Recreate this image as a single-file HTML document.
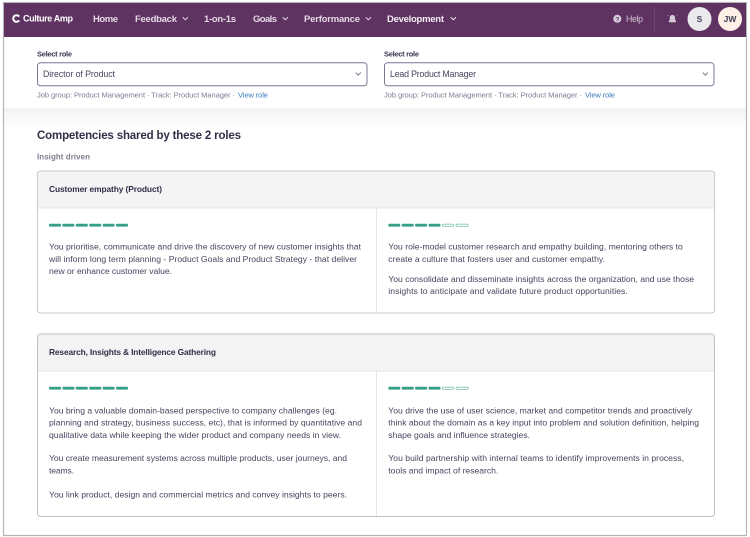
<!DOCTYPE html>
<html lang="en"><head><meta charset="utf-8"><title>Culture Amp</title>
<style>
html,body{margin:0;padding:0;background:#fff;width:750px;height:537px;overflow:hidden}
svg{display:block;filter:blur(.3px)}
text{font-family:"Liberation Sans",sans-serif}
.nav{font-size:9.5px;fill:#e3d8e4;font-weight:bold}
.lbl{font-size:7.5px;fill:#35374f;font-weight:bold}
.sel{font-size:8.8px;fill:#45465e}
.meta{font-size:7.6px;fill:#7d7e92}
.link{font-size:7.6px;fill:#3b79bd}
.b{font-size:8.6px;fill:#45465e}
.t{font-size:8.4px;fill:#2f3048;font-weight:bold}
</style></head><body>
<svg width="750" height="537" viewBox="0 0 750 537" xmlns="http://www.w3.org/2000/svg">
<defs>
<linearGradient id="sh" x1="0" y1="0" x2="0" y2="1"><stop offset="0" stop-color="#f3f3f4"/><stop offset="1" stop-color="#fff"/></linearGradient>
<g id="full"><rect x="0" y="-1.4" width="12" height="2.8" rx="1" fill="#37a085"/><rect x="13.4" y="-1.4" width="12" height="2.8" rx="1" fill="#37a085"/><rect x="26.8" y="-1.4" width="12" height="2.8" rx="1" fill="#37a085"/><rect x="40.2" y="-1.4" width="12" height="2.8" rx="1" fill="#37a085"/></g>
<g id="two"><rect x="0" y="-1.4" width="12" height="2.8" rx="1" fill="#37a085"/><rect x="13.4" y="-1.4" width="12" height="2.8" rx="1" fill="#37a085"/></g>
<path id="chev" d="M0 0l2.3 2.3L4.6 0" fill="none" stroke-width="1" stroke-linecap="round" stroke-linejoin="round"/>
</defs>
<rect width="750" height="537" fill="#fff"/>
<rect x="4" y="108" width="742" height="20" fill="url(#sh)"/>
<rect x="3.5" y="2.5" width="743" height="533" fill="none" stroke="#b5b5b8" stroke-width="1.2"/>
<rect x="4" y="3" width="742" height="34" fill="#5f3361"/>

<path d="M19.2 16.6a3.3 3.3 0 1 0 0 3.8" fill="none" stroke="#fff" stroke-width="2"/>
<text x="23" y="21.6" textLength="50" font-size="9" font-weight="bold" fill="#fff">Culture Amp</text>
<text class="nav" x="93" y="22" textLength="25">Home</text>
<text class="nav" x="135" y="22" textLength="42">Feedback</text>
<use href="#chev" x="183" y="17.5" stroke="#e3d8e4"/>
<text class="nav" x="204" y="22" textLength="32">1-on-1s</text>
<text class="nav" x="253" y="22" textLength="24">Goals</text>
<use href="#chev" x="283" y="17.5" stroke="#e3d8e4"/>
<text class="nav" x="304" y="22" textLength="56">Performance</text>
<use href="#chev" x="366" y="17.5" stroke="#e3d8e4"/>
<text class="nav" x="387" y="22" textLength="57" style="fill:#f3edf3">Development</text>
<use href="#chev" x="451" y="17.5" stroke="#f3edf3"/>

<circle cx="617.3" cy="18.8" r="4" fill="#d8cbd9"/>
<text x="615.4" y="21.5" font-size="6.5" font-weight="bold" fill="#5f3361">?</text>
<text x="626" y="22" textLength="17" font-size="8.8" fill="#d3c5d4">Help</text>
<rect x="654" y="7" width="1" height="24" fill="#6f4671"/>
<path d="M669 22v-1l1-1v-2.5a2.4 2.4 0 0 1 4.8 0V20l1 1v1zM667.5 15l1 1M677.5 15l-1 1" fill="#d8cbd9" stroke="#d8cbd9" stroke-width=".5"/>
<circle cx="699.5" cy="19" r="12" fill="#eaeaec"/>
<text x="699.5" y="22" text-anchor="middle" font-size="8.5" font-weight="bold" fill="#3d3e55">S</text>
<circle cx="730" cy="19" r="12" fill="#fdf0e6"/>
<text x="730" y="22" text-anchor="middle" font-size="8.5" font-weight="bold" fill="#3d3e55">JW</text>

<text class="lbl" x="37" y="56.3" textLength="35">Select role</text>
<rect x="37.5" y="62.8" width="329.5" height="23" rx="3" fill="#fff" stroke="#77788f" stroke-width="1"/>
<text class="sel" x="43" y="77.2" textLength="72">Director of Product</text>
<use href="#chev" x="356" y="72.8" stroke="#77788f"/>
<text class="meta" x="37" y="97.3" textLength="198">Job group: Product Management · Track: Product Manager ·</text>
<text class="link" x="238" y="97.3" textLength="30">View role</text>

<text class="lbl" x="384" y="56.3" textLength="35">Select role</text>
<rect x="384.5" y="62.8" width="329.5" height="23" rx="3" fill="#fff" stroke="#77788f" stroke-width="1"/>
<text class="sel" x="390" y="77.2" textLength="86">Lead Product Manager</text>
<use href="#chev" x="703" y="72.8" stroke="#77788f"/>
<text class="meta" x="384" y="97.3" textLength="198">Job group: Product Management · Track: Product Manager ·</text>
<text class="link" x="585" y="97.3" textLength="30">View role</text>

<text x="37" y="139" textLength="204" font-size="11.5" font-weight="bold" fill="#2f3048">Competencies shared by these 2 roles</text>
<text x="37" y="159.3" textLength="53" font-size="8" font-weight="bold" fill="#7d7e90">Insight driven</text>

<!-- card 1 -->
<path d="M37.5 207.5V174a3 3 0 0 1 3-3h671a3 3 0 0 1 3 3v33.5z" fill="#f4f4f5"/>
<rect x="37.5" y="171" width="677" height="142" rx="3" fill="none" stroke="#c8c8cc" stroke-width="1"/>
<rect x="38" y="207.5" width="676" height="1" fill="#e6e6e8"/>
<rect x="376" y="208" width="1" height="105" fill="#e6e6e8"/>
<text class="t" x="49" y="192" textLength="113">Customer empathy (Product)</text>
<use href="#full" x="49" y="225.2"/><use href="#two" x="102.6" y="225.2"/>
<use href="#full" x="388.3" y="225.2"/>
<rect x="442.3" y="224.2" width="11.4" height="2.2" rx="1" fill="#fff" stroke="#7fc4af" stroke-width=".8"/>
<rect x="456" y="224.2" width="12.2" height="2.2" rx="1" fill="#fff" stroke="#7fc4af" stroke-width=".8"/>
<text class="b" x="49" y="249.5" textLength="312">You prioritise, communicate and drive the discovery of new customer insights that</text>
<text class="b" x="49" y="261.8" textLength="308">will inform long term planning - Product Goals and Product Strategy - that deliver</text>
<text class="b" x="49" y="274.2" textLength="123">new or enhance customer value.</text>
<text class="b" x="388.3" y="249.5" textLength="294.5">You role-model customer research and empathy building, mentoring others to</text>
<text class="b" x="388.3" y="261.8" textLength="216.7">create a culture that fosters user and customer empathy.</text>
<text class="b" x="388.3" y="281.8" textLength="305.7">You consolidate and disseminate insights across the organization, and use those</text>
<text class="b" x="388.3" y="294.2" textLength="239.5">insights to anticipate and validate future product opportunities.</text>

<!-- card 2 -->
<path d="M37.5 370.5V337a3 3 0 0 1 3-3h671a3 3 0 0 1 3 3v33.5z" fill="#f4f4f5"/>
<rect x="37.5" y="334" width="677" height="182.5" rx="3" fill="none" stroke="#c0c0c4" stroke-width="1"/>
<rect x="38" y="370.5" width="676" height="1" fill="#e6e6e8"/>
<rect x="376" y="371" width="1" height="145" fill="#e6e6e8"/>
<text class="t" x="49" y="355" textLength="167">Research, Insights &amp; Intelligence Gathering</text>
<use href="#full" x="49" y="388.2"/><use href="#two" x="102.6" y="388.2"/>
<use href="#full" x="388.3" y="388.2"/>
<rect x="442.3" y="387.2" width="11.4" height="2.2" rx="1" fill="#fff" stroke="#7fc4af" stroke-width=".8"/>
<rect x="456" y="387.2" width="12.2" height="2.2" rx="1" fill="#fff" stroke="#7fc4af" stroke-width=".8"/>
<text class="b" x="49" y="413.3" textLength="288">You bring a valuable domain-based perspective to company challenges (eg.</text>
<text class="b" x="49" y="425.6" textLength="313">planning and strategy, business success, etc), that is informed by quantitative and</text>
<text class="b" x="49" y="438" textLength="292">qualitative data while keeping the wider product and company needs in view.</text>
<text class="b" x="49" y="461" textLength="298">You create measurement systems across multiple products, user journeys, and</text>
<text class="b" x="49" y="473.4" textLength="25">teams.</text>
<text class="b" x="49" y="497.5" textLength="298">You link product, design and commercial metrics and convey insights to peers.</text>
<text class="b" x="388.3" y="413.3" textLength="303.7">You drive the use of user science, market and competitor trends and proactively</text>
<text class="b" x="388.3" y="425.6" textLength="310.7">think about the domain as a key input into problem and solution definition, helping</text>
<text class="b" x="388.3" y="438" textLength="141.7">shape goals and influence strategies.</text>
<text class="b" x="388.3" y="461" textLength="295.7">You build partnership with internal teams to identify improvements in process,</text>
<text class="b" x="388.3" y="473.4" textLength="110">tools and impact of research.</text>
</svg>
</body></html>
